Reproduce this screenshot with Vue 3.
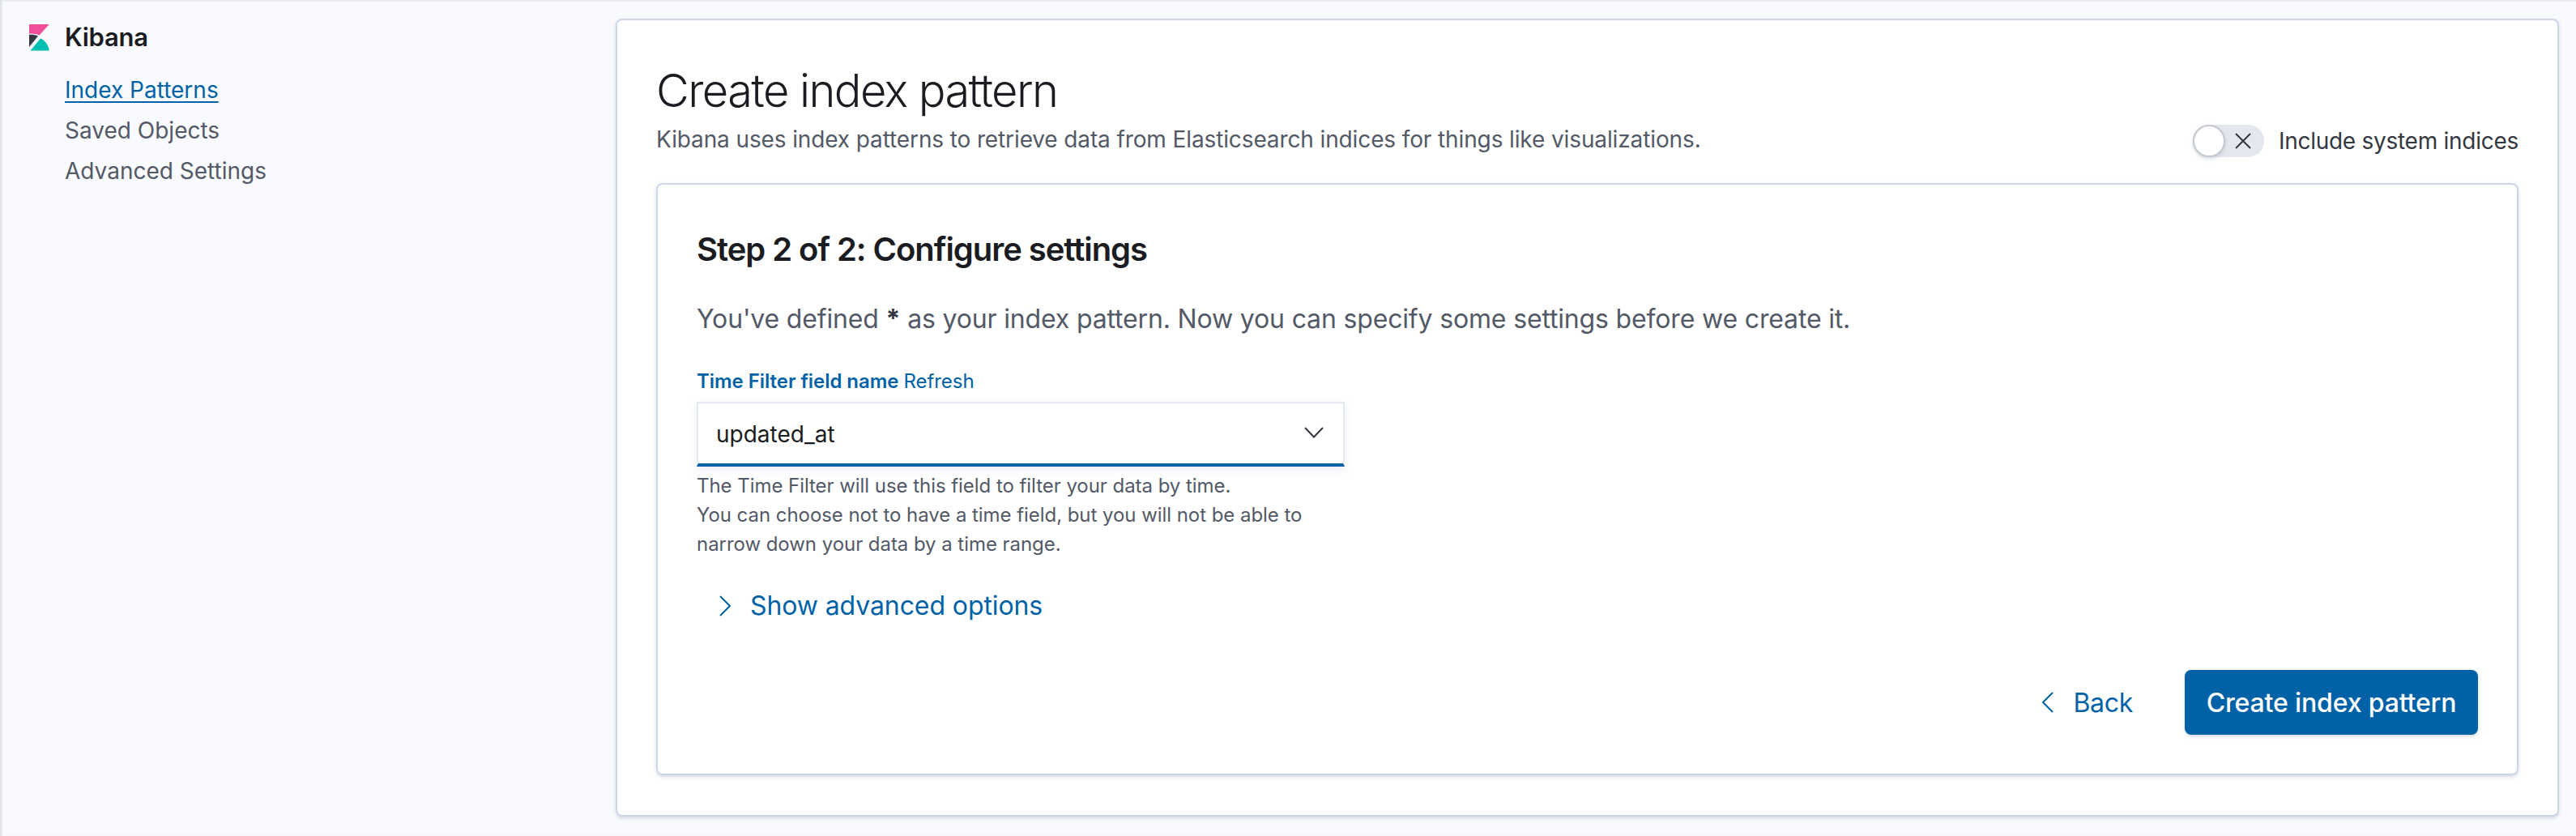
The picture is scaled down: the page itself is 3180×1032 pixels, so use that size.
<template>
  <div class="page">
    <aside class="sidebar">
      <div class="brand">
        <svg class="logo" width="26" height="34" viewBox="0 0 26 34">
          <path d="M0 0 H24.7 L12.6 13.5 C9 12 4 11.3 0 11.7 Z" fill="#f04e98" />
          <path d="M0 12.8 C4 12.4 8 13 11 14.5 L0 28 Z" fill="#343741" />
          <path d="M1.5 32.5 L14 17.5 C20 20 24 26 24.7 32.5 Z" fill="#00bfb3" />
        </svg>
        <span class="brand-name">Kibana</span>
      </div>
      <nav class="nav">
        <a class="nav-link active">Index Patterns</a>
        <a class="nav-link">Saved Objects</a>
        <a class="nav-link">Advanced Settings</a>
      </nav>
    </aside>

    <main class="panel">
      <div class="panel-head">
        <div>
          <h1 class="title">Create index pattern</h1>
          <p class="subtitle">Kibana uses index patterns to retrieve data from Elasticsearch indices for things like visualizations.</p>
        </div>
        <div class="switch-row">
          <span class="switch">
            <span class="thumb"></span>
            <svg class="switch-x" width="20" height="20" viewBox="0 0 20 20">
              <path d="M1 1 L19 19 M19 1 L1 19" fill="none" stroke="#343741" stroke-width="2" />
            </svg>
          </span>
          <span class="switch-label">Include system indices</span>
        </div>
      </div>

      <section class="card">
        <h2 class="step">Step 2 of 2: Configure settings</h2>
        <p class="lead">You've defined <strong>*</strong> as your index pattern. Now you can specify some settings before we create it.</p>

        <div class="field">
          <div class="label-row">
            <span class="label">Time Filter field name</span>
            <a class="refresh">Refresh</a>
          </div>
          <div class="select">
            <span class="select-value">updated_at</span>
            <svg width="24" height="14" viewBox="0 0 24 14">
              <path d="M1 1 L12 12.5 L23 1" fill="none" stroke="#343741" stroke-width="2" />
            </svg>
          </div>
          <div class="help">
            The Time Filter will use this field to filter your data by time.<br>
            You can choose not to have a time field, but you will not be able to<br>
            narrow down your data by a time range.
          </div>
        </div>

        <a class="advanced">
          <svg width="14" height="26" viewBox="0 0 14 26">
            <path d="M1 1 L13 13 L1 25" fill="none" stroke="#0062a6" stroke-width="2" />
          </svg>
          <span>Show advanced options</span>
        </a>

        <div class="actions">
          <a class="back">
            <svg width="14" height="26" viewBox="0 0 14 26">
              <path d="M13 1 L1 13 L13 25" fill="none" stroke="#0062a6" stroke-width="2" />
            </svg>
            <span>Back</span>
          </a>
          <button class="primary">Create index pattern</button>
        </div>
      </section>
    </main>
  </div>
</template>

<script setup>
</script>

<style>
body {
  margin: 0;
  background: #f9fafd;
}
</style>

<style scoped>
.page {
  display: flex;
  align-items: flex-start;
  width: 3180px;
  height: 1032px;
  box-sizing: border-box;
  padding: 23px 21px 0 0;
  background: #f9fafd;
  box-shadow: inset 2px 1px 3px rgba(90, 100, 120, 0.18);
  font-family: Inter, "Liberation Sans", sans-serif;
  color: #1a1c21;
  overflow: hidden;
}

.sidebar {
  width: 760px;
  flex: none;
  box-sizing: border-box;
  padding: 7px 0 0 36px;
}

.brand {
  display: flex;
  align-items: center;
  gap: 18px;
  height: 34px;
}

.brand-name {
  font-size: 31px;
  font-weight: 600;
  letter-spacing: -0.3px;
  position: relative;
  top: -2px;
}

.nav {
  display: flex;
  flex-direction: column;
  gap: 10px;
  margin: 27px 0 0 44px;
}

.nav-link {
  font-size: 28px;
  line-height: 40px;
  color: #535966;
}

.nav-link.active {
  color: #0062a6;
  text-decoration: underline;
  text-decoration-thickness: 2px;
  text-underline-offset: 4px;
}

.panel {
  flex: 1;
  height: 985px;
  box-sizing: border-box;
  padding: 48px;
  background: #fff;
  border: 2px solid #cdd6e6;
  border-radius: 8px;
  box-shadow: 0 2px 4px rgba(130, 145, 175, 0.35);
}

.panel-head {
  display: flex;
  justify-content: space-between;
  align-items: flex-start;
  height: 153px;
}

.title {
  margin: 3px 0 0;
  font-size: 56px;
  line-height: 72px;
  font-weight: 300;
  letter-spacing: -1.6px;
}

.subtitle {
  margin: 4px 0 0;
  font-size: 28px;
  line-height: 40px;
  letter-spacing: -0.12px;
  color: #535966;
}

.switch-row {
  display: flex;
  align-items: center;
  gap: 18px;
  margin-top: 81px;
}

.switch {
  position: relative;
  display: block;
  width: 88px;
  height: 40px;
  border-radius: 20px;
  background: #e4e8ee;
}

.thumb {
  position: absolute;
  top: 0;
  left: 0;
  width: 40px;
  height: 40px;
  box-sizing: border-box;
  border: 2px solid #c4c8cf;
  border-radius: 50%;
  background: #fff;
  box-shadow: 0 2px 4px rgba(152, 162, 179, 0.4);
}

.switch-x {
  position: absolute;
  top: 10px;
  left: 52px;
}

.switch-label {
  font-size: 28px;
  line-height: 40px;
  letter-spacing: -0.27px;
  color: #343741;
}

.card {
  height: 731px;
  box-sizing: border-box;
  padding: 50px 48px 48px;
  border: 2px solid #cdd6e6;
  border-radius: 8px;
  box-shadow: 0 2px 4px rgba(130, 145, 175, 0.35);
  display: flex;
  flex-direction: column;
}

.step {
  margin: 0;
  font-size: 40px;
  line-height: 60px;
  font-weight: 600;
  letter-spacing: -1.05px;
}

.lead {
  margin: 32px 0 0;
  font-size: 32px;
  line-height: 48px;
  letter-spacing: -0.16px;
  color: #535966;
}

.lead strong {
  color: #343741;
}

.field {
  margin-top: 32px;
}

.label-row {
  display: flex;
  gap: 6px;
  height: 36px;
  margin-top: 2px;
  align-items: center;
  font-size: 24px;
  letter-spacing: -0.05px;
}

.label {
  font-weight: 600;
  color: #0062a6;
}

.refresh {
  color: #0062a6;
}

.select {
  display: flex;
  justify-content: space-between;
  align-items: center;
  box-sizing: border-box;
  width: 800px;
  height: 80px;
  margin-top: 8px;
  padding: 0 24px 2px 22px;
  border: 2px solid #e4e8f0;
  border-bottom: 4px solid #0062a6;
  background: #fff;
  box-shadow: 0 4px 8px rgba(152, 162, 179, 0.2);
  font-size: 28px;
  color: #1a1c21;
}

.select-value {
  padding-top: 3px;
}

.help {
  margin-top: 6px;
  width: 800px;
  font-size: 24px;
  line-height: 36px;
  letter-spacing: -0.05px;
  color: #535966;
}

.advanced {
  display: flex;
  align-items: center;
  gap: 24px;
  margin: 34px 0 0 28px;
  font-size: 32px;
  line-height: 48px;
  letter-spacing: -0.1px;
  color: #0062a6;
}

.actions {
  display: flex;
  justify-content: flex-end;
  align-items: center;
  gap: 64px;
  margin-top: auto;
}

.back {
  display: flex;
  align-items: center;
  gap: 24px;
  font-size: 32px;
  letter-spacing: -0.3px;
  color: #0062a6;
}

.primary {
  width: 362px;
  height: 80px;
  border: 0;
  border-radius: 8px;
  background: #0062a6;
  color: #fff;
  font-family: inherit;
  font-size: 32px;
  font-weight: 500;
  letter-spacing: -0.15px;
  box-shadow: 0 2px 4px rgba(152, 162, 179, 0.4);
}
</style>
